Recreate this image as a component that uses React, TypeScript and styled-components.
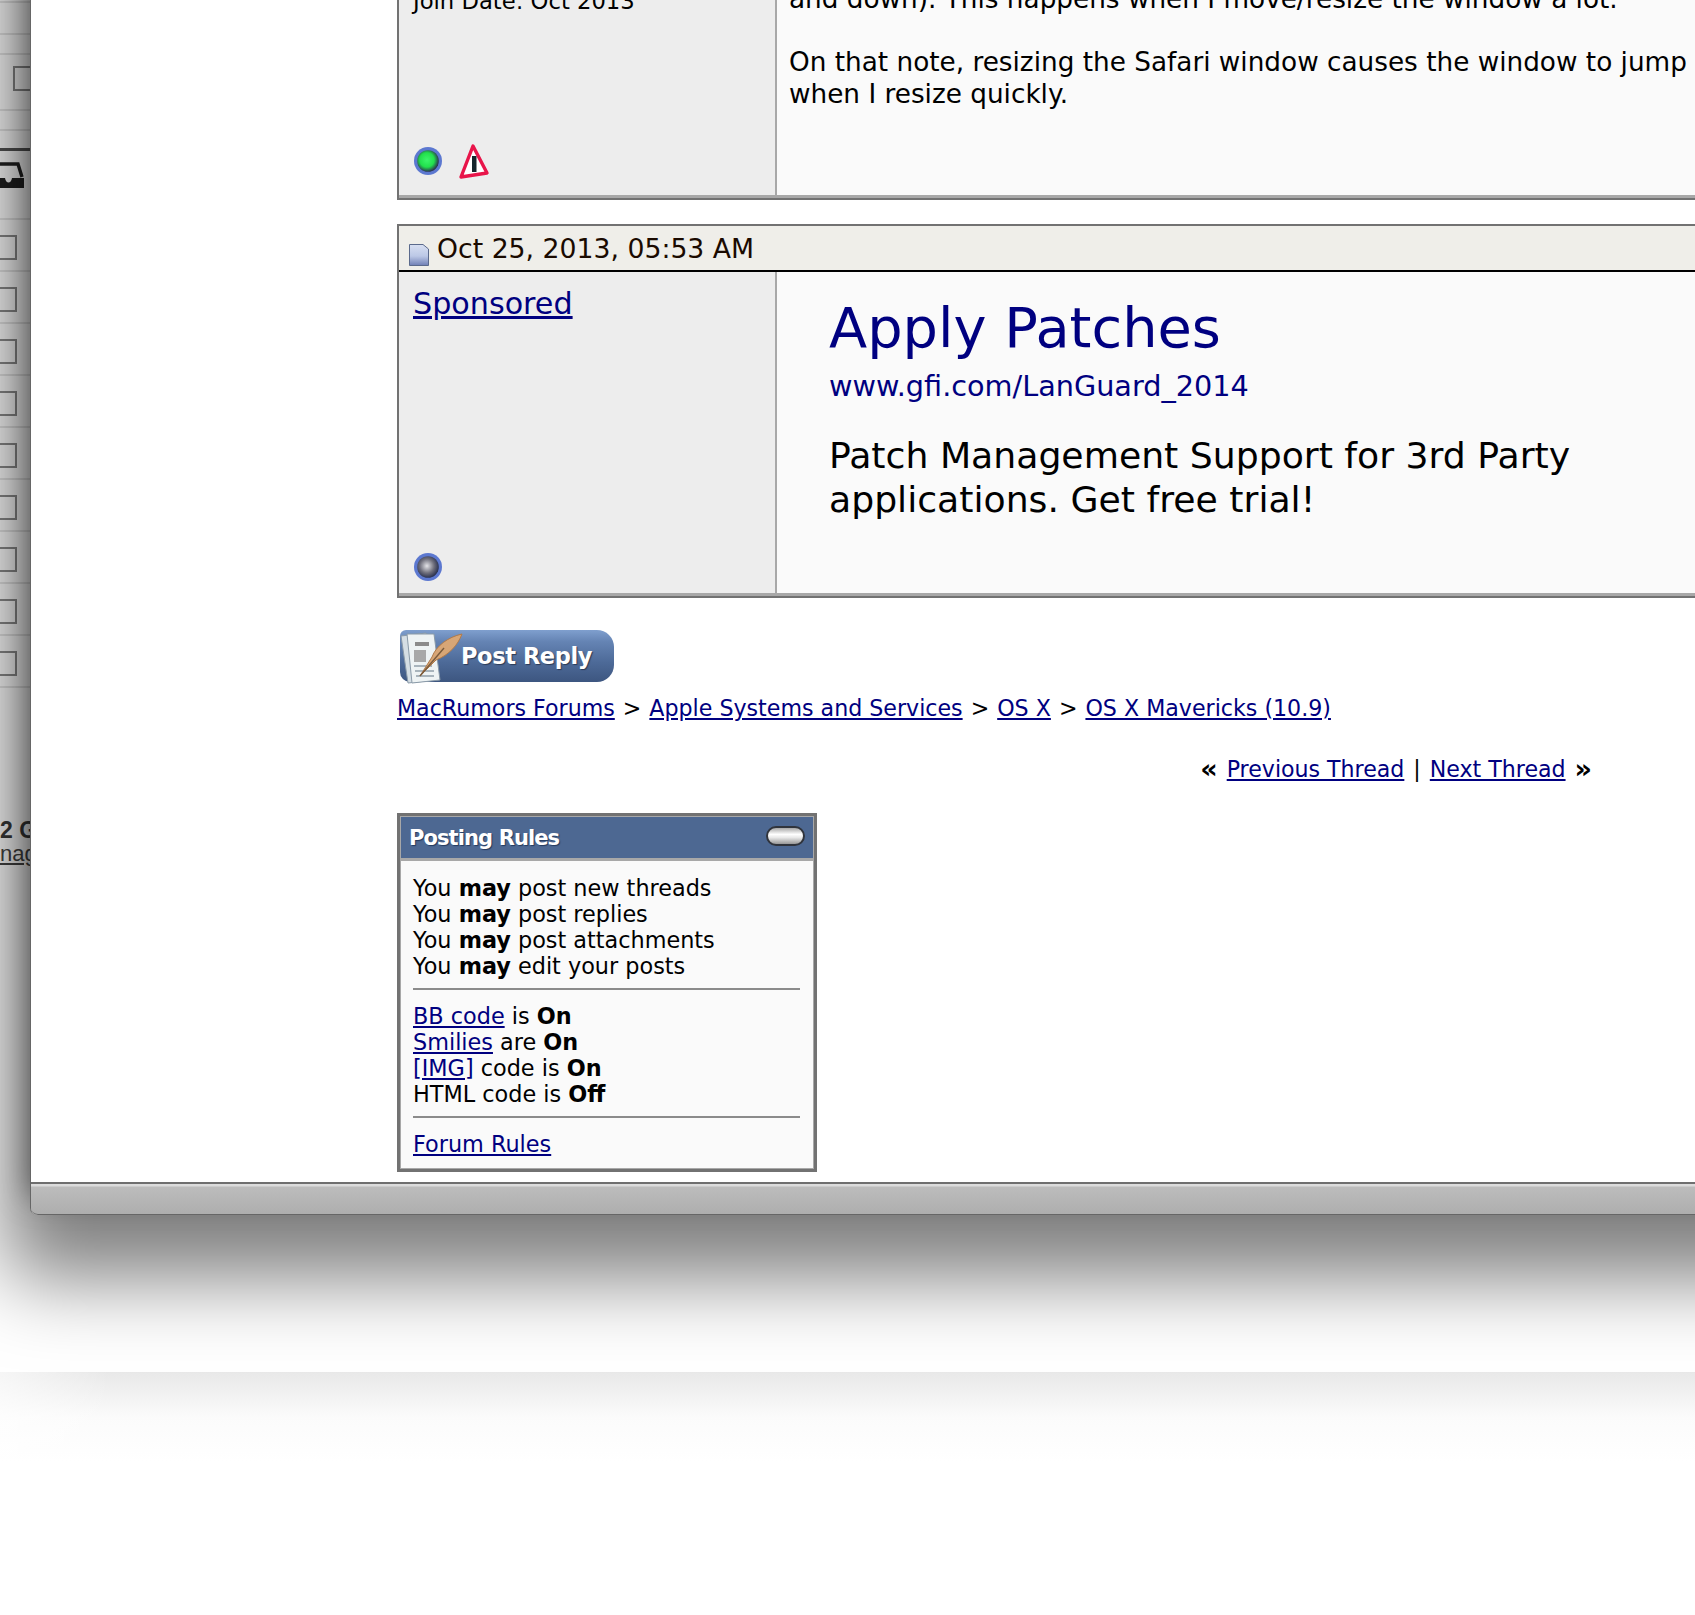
import React from "react";
import styled, { createGlobalStyle } from "styled-components";

const GlobalStyle = createGlobalStyle`
  html, body {
    margin: 0;
    padding: 0;
    background: #fff;
  }
  body {
    font-family: "DejaVu Sans", Verdana, sans-serif;
    color: #000;
  }
  a {
    color: #000080;
  }
`;

const Stage = styled.div`
  width: 1695px;
  height: 1615px;
  overflow: hidden;
  background: #fff;
`;

/* starts above the page so the shadow doesn't fade out at the top */
const Upper = styled.div`
  display: flex;
  margin-top: -200px;
  height: 1415px;
`;

/* sliver of the window behind, the big shadow falls on it */
const Strip = styled.div`
  width: 30px;
  flex: none;
  margin-top: 200px;
  height: 1182px;
  overflow: hidden;
  display: flex;
  flex-direction: column;
`;

const StripRow = styled.div<{ $h: number; $dark?: boolean }>`
  height: ${(p) => p.$h}px;
  flex: none;
  box-sizing: border-box;
  border-bottom: ${(p) => (p.$dark ? "3px solid #555" : "2px solid rgba(0, 0, 0, 0.1)")};
`;

const StripBoxRow = styled(StripRow)`
  padding-top: 15px;
`;

const TopBoxRow = styled(StripRow)`
  padding: 11px 0 0 13px;
`;

const StripCheck = styled.div`
  width: 25px;
  height: 25px;
  margin-left: -8px;
  box-sizing: border-box;
  border: 2px solid #8c8c8c;
`;

const TopCheck = styled(StripCheck)`
  margin-left: 0;
`;

const TrayRow = styled(StripRow)`
  padding-top: 11px;
`;

const StripText = styled.div`
  margin-top: 130px;
  font-family: "Liberation Sans", Arial, sans-serif;
  font-size: 23px;
  line-height: 24px;
  white-space: nowrap;
  color: #3a3a3a;
  b {
    display: block;
  }
  u {
    display: block;
    font-size: 22px;
    color: #444;
  }
`;

const Window = styled.div`
  position: relative;
  z-index: 1;
  width: 1900px;
  flex: none;
  display: flex;
  flex-direction: column;
  border-left: 1px solid #666;
  border-radius: 0 0 0 7px;
  background: #fff;
  box-shadow: 0 38px 80px 25px rgba(0, 0, 0, 0.5), 0 -20px 30px rgba(0, 0, 0, 0.5);
`;

const Page = styled.div`
  flex: 1;
  min-height: 0;
  overflow: hidden;
  padding: 200px 0 0 366px;
  background: #fff;
`;

const BottomBar = styled.div`
  height: 33px;
  flex: none;
  box-sizing: border-box;
  border-top: 2px solid #6f6f6f;
  border-bottom: 1px solid #666;
  border-radius: 0 0 0 7px;
  background: linear-gradient(#dcdcdc 0, #dcdcdc 2px, #bcbcbc 3px, #aeaeae 100%);
`;

const Post = styled.div<{ $clip?: boolean }>`
  width: 1400px;
  box-sizing: border-box;
  border: 2px solid #727272;
  border-top-width: ${(p) => (p.$clip ? 0 : 2)}px;
  margin-top: ${(p) => (p.$clip ? "-17px" : "24px")};
`;

const PostHead = styled.div`
  height: 46px;
  box-sizing: border-box;
  display: flex;
  align-items: center;
  gap: 8px;
  padding: 0 0 0 10px;
  background: #efeee9;
  border-bottom: 2px solid #000;
  font-size: 26.7px;
  color: #1a0a00;
`;

const PostBody = styled.div<{ $h: number }>`
  display: flex;
  height: ${(p) => p.$h}px;
  box-sizing: border-box;
  border-bottom: 3px solid #a8a8a8;
`;

const UserCell = styled.div`
  width: 378px;
  flex: none;
  box-sizing: border-box;
  display: flex;
  flex-direction: column;
  padding: 0 0 8px 14px;
  background: #ededed;
  border-right: 2px solid #a8a8a8;
`;

const UserFacts = styled.div`
  line-height: 32px;
  font-size: 22.7px;
  padding-top: 2px;
`;

const SponsorLink = styled.a`
  font-size: 30.2px;
  line-height: 38px;
  margin-top: 13px;
`;

const IconRow = styled.div<{ $lift?: number }>`
  margin-top: auto;
  margin-bottom: ${(p) => p.$lift ?? 0}px;
  display: flex;
  align-items: center;
  gap: 15px;
  height: 36px;
`;

const MessageCell = styled.div`
  flex: 1;
  background: #fafafa;
  padding: 1px 0 0 12px;
  font-size: 26.3px;
  line-height: 31.5px;
  white-space: nowrap;
  p {
    margin: 0 0 31.5px;
  }
`;

const AdCell = styled.div`
  flex: 1;
  background: #fafafa;
  padding: 21px 0 0 52px;
`;

const AdTitle = styled.a`
  display: block;
  font-size: 55.8px;
  line-height: 70px;
  color: #000080;
  text-decoration: none;
`;

const AdUrl = styled(AdTitle)`
  font-size: 28.7px;
  line-height: 40px;
  margin-top: 3px;
`;

const AdText = styled.div`
  margin-top: 28px;
  width: 790px;
  font-size: 36.2px;
  line-height: 43.5px;
`;

const ReplyButton = styled.div`
  position: relative;
  margin: 32px 0 0 3px;
  width: 214px;
  height: 52px;
  box-sizing: border-box;
  padding: 0 0 0 61px;
  display: flex;
  align-items: center;
  border-radius: 6px 17px 17px 10px;
  background: linear-gradient(#7f9fce 0, #6584b4 22%, #4d6a98 62%, #3d5680 100%);
  color: #fff;
  font-weight: bold;
  font-size: 22.5px;
  letter-spacing: -0.4px;
  text-shadow: 1px 1px 1px #2c3a55;
`;

/* only the papers and quill sit over the button */
const ReplyArt = styled.svg`
  position: absolute;
  left: -2px;
  top: 0;
`;

const Crumbs = styled.nav`
  display: flex;
  align-items: center;
  gap: 8px;
  margin-top: 12px;
  height: 28px;
  font-size: 22.15px;
  white-space: nowrap;
`;

const ThreadNav = styled.div`
  display: flex;
  align-items: center;
  justify-content: flex-end;
  gap: 9px;
  margin-top: 33px;
  width: 1195px;
  height: 28px;
  font-size: 22.1px;
  white-space: nowrap;
  b {
    font-size: 27px;
    line-height: 24px;
  }
`;

const RulesBox = styled.div`
  margin-top: 30px;
  width: 420px;
  box-sizing: border-box;
  border: 3px solid #727272;
  outline: 1px solid #a8a8a8;
  outline-offset: -4px;
`;

const RulesHead = styled.div`
  height: 45px;
  box-sizing: border-box;
  display: flex;
  align-items: center;
  justify-content: space-between;
  padding: 2px 9px 0 9px;
  background: #4d6892;
  border-bottom: 3px solid #a8a8a8;
  color: #fff;
  font-size: 21px;
  font-weight: bold;
  letter-spacing: -0.9px;
  text-shadow: 1px 1px 1px #243a5e;
`;

const Toggle = styled.div`
  width: 39px;
  height: 20px;
  margin-top: -4px;
  box-sizing: border-box;
  border: 2px solid #30343c;
  border-radius: 10px;
  background: linear-gradient(#a8a8a8, #fff 40%, #e8e8e8 60%, #989898);
`;

const RulesBody = styled.div`
  background: #fafafa;
  padding: 14px 12px 0 13px;
  font-size: 22.35px;
  line-height: 26px;
`;

const RulesGroup = styled.div`
  white-space: nowrap;
`;

const Rule = styled.div`
  height: 2px;
  margin: 9px 2px 13px 0;
  background: #8b8b8b;
`;

const RulesEnd = styled.div`
  height: 12px;
`;

const Floor = styled.div`
  position: relative;
  margin-top: 157px;
  height: 243px;
  background: linear-gradient(to right, rgba(255, 255, 255, 0.6), rgba(255, 255, 255, 0) 110px),
    linear-gradient(#e8e8e8, #fbfbfb 45px, #fff 90px);
`;

const StatusDot = ({ id, core, glow }: { id: string; core: string; glow: string }) => (
  <svg width="30" height="30" viewBox="0 0 30 30">
    <defs>
      <radialGradient id={id} cx="0.45" cy="0.45" r="0.55">
        <stop offset="0" stopColor={glow} />
        <stop offset="0.6" stopColor={core} />
        <stop offset="1" stopColor="#2c3350" />
      </radialGradient>
    </defs>
    <circle cx="15" cy="15" r="14" fill="#5c78d0" />
    <circle cx="15" cy="15" r="10.8" fill={`url(#${id})`} />
  </svg>
);

const WarnIcon = () => (
  <svg width="32" height="36" viewBox="0 0 32 36">
    <path d="M15 3 L29 30 L3 34 Z" fill="#fff" stroke="#e8154a" strokeWidth="3.4" strokeLinejoin="round" />
    <rect x="14" y="13" width="4.5" height="16" fill="#15262c" />
  </svg>
);

const PostIconWrap = styled.span`
  display: flex;
  margin-top: 13px;
`;

const PostIcon = () => (
  <PostIconWrap>
    <svg width="20" height="22" viewBox="0 0 20 22">
      <defs>
        <linearGradient id="postFill" x1="0" y1="0" x2="0" y2="1">
          <stop offset="0" stopColor="#d8e0f2" />
          <stop offset="0.55" stopColor="#bcc8e6" />
          <stop offset="1" stopColor="#6f7fb5" />
        </linearGradient>
      </defs>
      <path d="M0.5 0.5 H14 L19.5 5 V21.5 H0.5 Z" fill="url(#postFill)" stroke="#5b6a8c" />
    </svg>
  </PostIconWrap>
);

const TrayIcon = () => (
  <svg width="24" height="26" viewBox="0 0 24 26">
    <path d="M0 2 H18 L22 15" fill="none" stroke="#222" strokeWidth="3.4" />
    <path d="M0 16 H5 C6 22 11 22 12 16 H24 V26 H0 Z" fill="#222" />
  </svg>
);

const ReplyPapers = () => (
  <ReplyArt width="66" height="54" viewBox="0 0 66 54">
    <path d="M3 6 L28 3 L38 50 L10 53 Z" fill="#d5dee4" stroke="#8a9aa8" />
    <path d="M9 4 L36 4 L42 50 L14 53 Z" fill="#eef3f4" stroke="#8a9aa8" />
    <rect x="17" y="12" width="14" height="4" fill="#8b8b8b" />
    <rect x="16" y="20" width="12" height="12" fill="#a8a8a8" />
    <path d="M16 36 H34 M17 41 H36 M18 46 H36" stroke="#a8b4bc" strokeWidth="2" />
    <path d="M22 46 L34 27 C38 16 50 7 64 4 C60 15 51 25 38 30 Z" fill="#d8a676" stroke="#b07a4a" />
    <path d="M22 46 L46 18" stroke="#7a5b3c" strokeWidth="1.4" />
  </ReplyArt>
);

const checkRows = [0, 1, 2, 3, 4, 5, 6, 7, 8];

export default function App() {
  return (
    <Stage>
      <GlobalStyle />
      <Upper>
        <Strip>
          <StripRow $h={3} />
          <StripRow $h={32} />
          <StripRow $h={20} />
          <TopBoxRow $h={56}>
            <TopCheck />
          </TopBoxRow>
          <StripRow $h={20} />
          <StripRow $h={20} $dark />
          <TrayRow $h={69}>
            <TrayIcon />
          </TrayRow>
          {checkRows.map((row) => (
            <StripBoxRow key={row} $h={52}>
              <StripCheck />
            </StripBoxRow>
          ))}
          <StripText>
            <b>2 G</b>
            <u>nag</u>
          </StripText>
        </Strip>
        <Window>
          <Page>
            <Post $clip>
              <PostBody $h={215}>
                <UserCell>
                  <UserFacts>Join Date: Oct 2013</UserFacts>
                  <IconRow $lift={8}>
                    <StatusDot id="dotOn" core="#22e04c" glow="#3cf56a" />
                    <WarnIcon />
                  </IconRow>
                </UserCell>
                <MessageCell>
                  <p>and down). This happens when I move/resize the window a lot.</p>
                  On that note, resizing the Safari window causes the window to jump to the side
                  <br />
                  when I resize quickly.
                </MessageCell>
              </PostBody>
            </Post>
            <Post>
              <PostHead>
                <PostIcon />
                Oct 25, 2013, 05:53 AM
              </PostHead>
              <PostBody $h={324}>
                <UserCell>
                  <SponsorLink href="#">Sponsored</SponsorLink>
                  <IconRow>
                    <StatusDot id="dotOff" core="#6f6f7c" glow="#e4e4e8" />
                  </IconRow>
                </UserCell>
                <AdCell>
                  <AdTitle href="#">Apply Patches</AdTitle>
                  <AdUrl href="#">www.gfi.com/LanGuard_2014</AdUrl>
                  <AdText>Patch Management Support for 3rd Party applications. Get free trial!</AdText>
                </AdCell>
              </PostBody>
            </Post>
            <ReplyButton>
              <ReplyPapers />
              Post Reply
            </ReplyButton>
            <Crumbs>
              <a href="#">MacRumors Forums</a>
              <span>&gt;</span>
              <a href="#">Apple Systems and Services</a>
              <span>&gt;</span>
              <a href="#">OS X</a>
              <span>&gt;</span>
              <a href="#">OS X Mavericks (10.9)</a>
            </Crumbs>
            <ThreadNav>
              <b>«</b>
              <a href="#">Previous Thread</a>
              <span>|</span>
              <a href="#">Next Thread</a>
              <b>»</b>
            </ThreadNav>
            <RulesBox>
              <RulesHead>
                Posting Rules
                <Toggle />
              </RulesHead>
              <RulesBody>
                <RulesGroup>
                  You <b>may</b> post new threads
                  <br />
                  You <b>may</b> post replies
                  <br />
                  You <b>may</b> post attachments
                  <br />
                  You <b>may</b> edit your posts
                </RulesGroup>
                <Rule />
                <RulesGroup>
                  <a href="#">BB code</a> is <b>On</b>
                  <br />
                  <a href="#">Smilies</a> are <b>On</b>
                  <br />
                  <a href="#">[IMG]</a> code is <b>On</b>
                  <br />
                  HTML code is <b>Off</b>
                </RulesGroup>
                <Rule />
                <RulesGroup>
                  <a href="#">Forum Rules</a>
                </RulesGroup>
                <RulesEnd />
              </RulesBody>
            </RulesBox>
          </Page>
          <BottomBar />
        </Window>
      </Upper>
      <Floor />
    </Stage>
  );
}
